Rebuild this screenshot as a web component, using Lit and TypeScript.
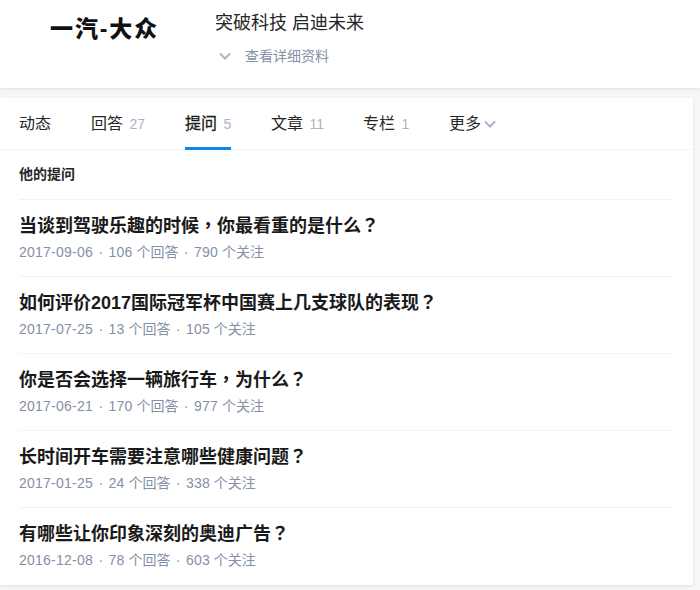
import { LitElement, html, css, svg } from "lit";
import { customElement } from "lit/decorators.js";

const chevron = svg`<path d="M1 1.5 L6 6.5 L11 1.5" fill="none" stroke="currentColor" stroke-width="2"/>`;

const tabs = [
  { label: "动态", count: "", width: 72 },
  { label: "回答", count: "27", width: 94 },
  { label: "提问", count: "5", width: 86, active: true },
  { label: "文章", count: "11", width: 92 },
  { label: "专栏", count: "1", width: 86 },
];

const items = [
  { title: "当谈到驾驶乐趣的时候，你最看重的是什么？", date: "2017-09-06", answers: "106", follows: "790" },
  { title: "如何评价2017国际冠军杯中国赛上几支球队的表现？", date: "2017-07-25", answers: "13", follows: "105" },
  { title: "你是否会选择一辆旅行车，为什么？", date: "2017-06-21", answers: "170", follows: "977" },
  { title: "长时间开车需要注意哪些健康问题？", date: "2017-01-25", answers: "24", follows: "338" },
  { title: "有哪些让你印象深刻的奥迪广告？", date: "2016-12-08", answers: "78", follows: "603" },
];

const withPunct = (text: string) =>
  text.split(/([，？])/).map((part) =>
    part === "，" || part === "？" ? html`<span class="punct">${part}</span>` : part
  );

@customElement("app-root")
export class AppRoot extends LitElement {
  static styles = css`
    :host {
      display: block;
      width: 700px;
      height: 590px;
      overflow: hidden;
      background: #f6f6f6;
      font-family: "Liberation Sans", "Noto Sans CJK SC", sans-serif;
      color: #1a1a1a;
    }
    .profile, .main {
      background: #fff;
      box-shadow: 0 1px 3px rgba(26, 26, 26, 0.1);
    }
    .profile {
      height: 88px;
      box-sizing: border-box;
      display: flex;
      margin-bottom: 10px;
    }
    .logo {
      width: 215px;
      box-sizing: border-box;
      padding: 13px 0 0 50px;
      font-size: 23px;
      line-height: 32px;
      font-weight: 900;
      color: #111;
      white-space: nowrap;
      letter-spacing: 1.9px;
    }
    .info { padding-top: 9px; }
    .headline { font-size: 18px; line-height: 28px; color: #262626; }
    .detail {
      display: flex;
      align-items: center;
      margin-top: 9px;
      font-size: 14px;
      line-height: 20px;
      color: #8590a6;
    }
    .detail svg { width: 12px; height: 8px; margin: 0 14px 0 4px; color: #a9b4c9; }
    .main { width: 693px; height: 487px; border-radius: 0 2px 2px 0; }
    .tabs {
      height: 52px;
      box-sizing: border-box;
      display: flex;
      padding-left: 19px;
      border-bottom: 1px solid #f0f2f7;
    }
    .tab {
      height: 52px;
      box-sizing: border-box;
      font-size: 16px;
      line-height: 51px;
      color: #262626;
      white-space: nowrap;
      flex: none;
    }
    .tab .in { display: inline-block; height: 52px; box-sizing: border-box; }
    .tab.active .in { border-bottom: 3px solid #0f88eb; color: #1a1a1a; -webkit-text-stroke: 0.3px #1a1a1a; }
    .count { color: #a9b4c9; font-size: 14px; margin-left: 2px; -webkit-text-stroke: 0; }
    .more svg { width: 12px; height: 8px; margin-left: 3px; vertical-align: 1px; color: #a9b4c9; }
    .list { padding: 0 21px 0 19px; }
    .heading {
      height: 49px;
      line-height: 48px;
      font-size: 14px;
      font-weight: 700;
      color: #262626;
    }
    .item {
      height: 77px;
      box-sizing: border-box;
      border-top: 1px solid #f0f2f7;
      padding-top: 12px;
    }
    .title { font-size: 18px; line-height: 28px; font-weight: 700; color: #1a1a1a; white-space: nowrap; }
    .punct { font-family: "Noto Sans CJK TC", sans-serif; line-height: 0; }
    .meta { font-size: 14px; line-height: 24px; color: #8590a6; white-space: nowrap; }
    .num { letter-spacing: 0.24px; }
    .dot { margin: 0 1.5px; }
  `;

  render() {
    return html`
      <section class="profile">
        <div class="logo">一汽-大众</div>
        <div class="info">
          <div class="headline">突破科技 启迪未来</div>
          <div class="detail">
            <svg viewBox="0 0 12 8">${chevron}</svg>
            <span>查看详细资料</span>
          </div>
        </div>
      </section>
      <section class="main">
        <nav class="tabs">
          ${tabs.map(
            (t) => html`<div class="tab ${t.active ? "active" : ""}" style="width:${t.width}px">
              <span class="in">${t.label}${t.count ? html` <span class="count">${t.count}</span>` : ""}</span>
            </div>`
          )}
          <div class="tab more">
            <span class="in">更多<svg viewBox="0 0 12 8">${chevron}</svg></span>
          </div>
        </nav>
        <div class="list">
          <div class="heading">他的提问</div>
          ${items.map(
            (it) => html`<article class="item">
              <div class="title">${withPunct(it.title)}</div>
              <div class="meta"><span class="num">${it.date}</span><span class="dot"> · </span><span class="num">${it.answers}</span> 个回答<span class="dot"> · </span><span class="num">${it.follows}</span> 个关注</div>
            </article>`
          )}
        </div>
      </section>
    `;
  }
}
